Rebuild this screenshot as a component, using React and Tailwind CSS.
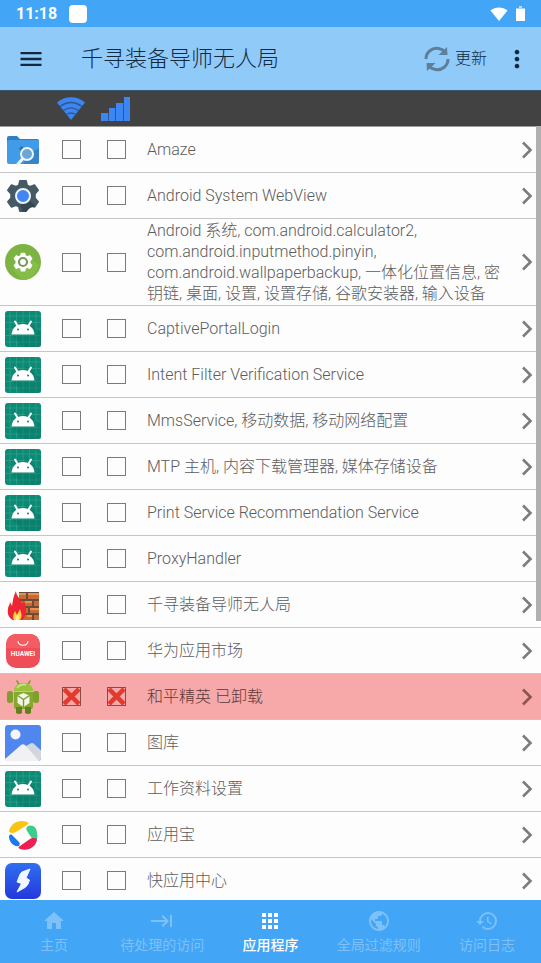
import { useState } from 'react';
import {
  MdApps,
  MdHistory,
  MdHome,
  MdKeyboardTab,
  MdMenu,
  MdMoreVert,
  MdPublic,
} from 'react-icons/md';

const APPS = [
  { id: 'amaze', name: 'Amaze', icon: 'amaze' },
  { id: 'webview', name: 'Android System WebView', icon: 'webview' },
  {
    id: 'system',
    name: 'Android 系统, com.android.calculator2, com.android.inputmethod.pinyin, com.android.wallpaperbackup, 一体化位置信息, 密钥链, 桌面, 设置, 设置存储, 谷歌安装器, 输入设备',
    icon: 'system',
  },
  { id: 'captive', name: 'CaptivePortalLogin', icon: 'android' },
  { id: 'intent', name: 'Intent Filter Verification Service', icon: 'android' },
  { id: 'mms', name: 'MmsService, 移动数据, 移动网络配置', icon: 'android' },
  { id: 'mtp', name: 'MTP 主机, 内容下载管理器, 媒体存储设备', icon: 'android' },
  { id: 'print', name: 'Print Service Recommendation Service', icon: 'android' },
  { id: 'proxy', name: 'ProxyHandler', icon: 'android' },
  { id: 'firewall', name: '千寻装备导师无人局', icon: 'firewall' },
  { id: 'huawei', name: '华为应用市场', icon: 'huawei' },
  { id: 'game', name: '和平精英 已卸载', icon: 'robot', blocked: true },
  { id: 'gallery', name: '图库', icon: 'gallery' },
  { id: 'work', name: '工作资料设置', icon: 'android' },
  { id: 'yyb', name: '应用宝', icon: 'pinwheel' },
  { id: 'quick', name: '快应用中心', icon: 'bolt' },
];

const TABS = [
  { label: '主页', Icon: MdHome },
  { label: '待处理的访问', Icon: MdKeyboardTab },
  { label: '应用程序', Icon: MdApps },
  { label: '全局过滤规则', Icon: MdPublic },
  { label: '访问日志', Icon: MdHistory },
];

const GEAR =
  'M15 3h6l1 4.5 3 1.5 4.5-1.8 3.5 5-3.2 3.6v4.4l3.2 3.6-3.5 5-4.5-1.8-3 1.5-1 4.5h-6l-1-4.5-3-1.5-4.5 1.8-3.5-5 3.2-3.6v-4.4L3 12.200l3.500-5L11 9l3-1.500z';

function AmazeIcon() {
  return (
    <>
      <path d="M2 6q0-2 2-2h8l3 3h17q2 0 2 2v3H2z" fill="#2f7fc4" />
      <path d="M2 10q0-2 2-2h28q2 0 2 2v20q0 2-2 2H4q-2 0-2-2z" fill="#429be6" />
      <path d="m24 22 10-6v14q0 2-2 2H18z" fill="#3685ca" />
      <path d="m14 16 3-2 2 3-3 3z" fill="#2b73b5" />
      <circle cx="22" cy="22" r="6" fill="#6ba6d6" stroke="#eef5fb" strokeWidth="2" />
      <path d="m17.500 27-5 5.500" stroke="#eef5fb" strokeWidth="3" strokeLinecap="round" />
    </>
  );
}

function WebViewIcon() {
  return (
    <>
      <path d={GEAR} fill="#455a64" stroke="#455a64" strokeWidth="2" strokeLinejoin="round" />
      <path d="m25 23 6 5-6 2-4 4h-3l-3-7z" fill="#344850" />
      <circle cx="18" cy="18" r="7" fill="#4285f4" stroke="#eef3fb" strokeWidth="2" />
    </>
  );
}

function SystemIcon() {
  return (
    <>
      <circle cx="18" cy="18" r="18" fill="#7cb342" />
      <path d="M8 26 18 8l16 13c-1 7-8 15-16 15z" fill="#85bd49" />
      <g transform="translate(7.500 7.500) scale(.585)">
        <path d={GEAR} fill="#fff" stroke="#fff" strokeWidth="2" strokeLinejoin="round" />
      </g>
      <circle cx="18" cy="18" r="4" fill="#fff" stroke="#7a9a5c" strokeWidth="2.200" />
    </>
  );
}

function AndroidIcon() {
  return (
    <>
      <rect width="36" height="36" rx="3" fill="#0b8a74" />
      <path
        d="M5 0v36M11.500 0v36M18 0v36M24.500 0v36M31 0v36M0 5h36M0 11.500h36M0 18h36M0 24.500h36M0 31h36"
        stroke="#3aa594"
        strokeWidth=".6"
      />
      <path d="m22 9 14 13v14H18L7 24z" fill="#05705f" opacity=".35" />
      <path d="m10 10.500 3 5M26 10.500l-3 5" stroke="#fff" strokeWidth="2" strokeLinecap="round" />
      <path d="M6.500 23.500c.6-6.500 5.300-10.500 11.500-10.500s10.900 4 11.500 10.500z" fill="#fff" />
      <circle cx="13" cy="18.500" r="1" fill="#2b7467" />
      <circle cx="23" cy="18.500" r="1" fill="#2b7467" />
    </>
  );
}

function FirewallIcon() {
  return (
    <>
      <rect x="14" y="5" width="20" height="28" fill="#6b4b3a" />
      <path
        d="M14 6h7v6h-7zM23 6h11v6H23zM14 14h13v5H14zM29 14h5v5h-5zM14 21h9v5h-9zM25 21h9v5h-9zM14 28h13v5H14zM29 28h5v5h-5z"
        fill="#c96a35"
      />
      <path d="M14 6h7v2h-7zM23 6h11v2H23zM20 14h7v2h-7zM25 21h9v2h-9zM22 28h5v2h-5z" fill="#e59355" />
      <path
        d="M11 4c0 5 5 8 6 13l2-3c2 5 3 10 1 15-1 3-3 4-5 4H8c-4-2-6-6-5-11 0-3 2-4 2-7l2 4c1-5 1-9 4-15z"
        fill="#ee2634"
      />
      <path d="M9 33c-2-4 0-6 1-9l2 4 3-6c1 4 3 7 0 11z" fill="#ffd23e" />
      <path d="M11 33c-1-3 1-4 2-6 1 2 1 4 0 6z" fill="#fff3a0" />
    </>
  );
}

function HuaweiIcon() {
  return (
    <>
      <rect x="1" y="1" width="34" height="34" rx="10" fill="#ef4d57" />
      <path d="M1 12Q2 1 12 1h12q10 0 11 11v3H1z" fill="#f25c62" />
      <path d="M13 8.500c1 5 9 5 10 0" fill="none" stroke="#fff" strokeWidth="1.200" strokeLinecap="round" />
      <text x="18" y="22.500" textAnchor="middle" fontSize="6.500" fontWeight="700" fill="#fff">
        HUAWEI
      </text>
    </>
  );
}

function RobotIcon() {
  return (
    <>
      <path d="m12 2 3 5M25 2l-3 5" stroke="#7d9a2a" strokeWidth="1.500" strokeLinecap="round" />
      <path d="M9 12c0-5 4-8 9.500-8S28 7 28 12z" fill="#9bc23c" />
      <path d="M12 9c2-3 6-4 9-3" stroke="#d0e58c" strokeWidth="1.500" fill="none" />
      <rect x="2" y="12" width="6" height="12" rx="2.500" fill="#7f9f2c" />
      <rect x="28" y="12" width="6" height="12" rx="2.500" fill="#7f9f2c" />
      <path d="M9 13h19v15q0 2-2 2H11q-2 0-2-2z" fill="#86a82f" />
      <path d="M11 28h6v6q-3 2-6 0zM20 28h6v6q-3 2-6 0z" fill="#65801f" />
      <path d="m18.500 14 6 2.500v7.500l-6 4-6-4v-7.500z" fill="#f2f6e6" />
      <path d="m12.500 16.500 6 4 6-4M18.500 20.500V28" fill="none" stroke="#7b9b2c" strokeWidth="1.400" />
    </>
  );
}

function GalleryIcon() {
  return (
    <>
      <rect width="36" height="36" rx="3" fill="#5087ee" />
      <path d="m21 21 4.500-2.500q1.500-1 3 0l7.500 7v7.500q0 3-3 3H20z" fill="#d3d6dc" />
      <path d="m0 34 16-14q2-1.500 4 0l14 16H3q-3 0-3-2z" fill="#f1f1f3" />
      <circle cx="10.500" cy="9.500" r="5" fill="#f4f6fb" />
    </>
  );
}

function PinwheelIcon() {
  return (
    <>
      <path d="M4 15C5 7 13 2 22 5c2 1 2 2 0 3L11 15q-3 2-7 0z" fill="#fbc312" />
      <path d="M23 9c5-2 9 2 9 7 1 4 0 6-1 8-1 1-2 1-3-1l-6-9c-1-2-1-4 1-5z" fill="#3dcc8b" />
      <path d="M32 22c0 7-9 13-17 10-2-1-2-2 0-3l10-7q3-2 7 0z" fill="#ee1f4e" />
      <path d="M14 29c-6 1-10-4-10-10 0-1 2-2 3-1l7 7c1 1 1 3 0 4z" fill="#1c78ef" />
    </>
  );
}

function BoltIcon() {
  return (
    <>
      <defs>
        <linearGradient id="boltFill" x1="0" y1="0" x2="0" y2="1">
          <stop offset="0" stopColor="#2f6ff0" />
          <stop offset="1" stopColor="#2338dc" />
        </linearGradient>
      </defs>
      <rect width="36" height="36" rx="7" fill="url(#boltFill)" />
      <path
        d="m25 6-8 3q-1.500 1-2 2.500L12 19l4.500 1.500L12 29l8-4.500q2-1.500 3-3.500l1.500-4-3.500-2z"
        fill="#f3f7ff"
        stroke="#f3f7ff"
        strokeLinejoin="round"
      />
    </>
  );
}

const ICONS = {
  amaze: AmazeIcon,
  webview: WebViewIcon,
  system: SystemIcon,
  android: AndroidIcon,
  firewall: FirewallIcon,
  huawei: HuaweiIcon,
  robot: RobotIcon,
  gallery: GalleryIcon,
  pinwheel: PinwheelIcon,
  bolt: BoltIcon,
};

function AppIcon({ type }) {
  const Shape = ICONS[type];
  return (
    <svg className="size-9" viewBox="0 0 36 36" aria-hidden="true">
      <Shape />
    </svg>
  );
}

function StatusBar() {
  return (
    <div className="flex h-[27px] shrink-0 items-center bg-[#42a5f5] px-4 text-white">
      <span className="text-base font-bold">11:18</span>
      <span className="ml-3 size-[18px] rounded bg-white" />
      <svg className="ml-auto h-[14px] w-[18px]" viewBox="0 0 18 14" aria-hidden="true">
        <path d="M9 14 .5 3.500C5 -.6 13-.6 17.500 3.500z" fill="currentColor" />
      </svg>
      <svg className="ml-2 h-[15px] w-[9px]" viewBox="0 0 9 15" aria-hidden="true">
        <path d="M3 0h3v2H3z" fill="currentColor" opacity=".6" />
        <path d="M0 2.500h9V15H0z" fill="currentColor" />
      </svg>
    </div>
  );
}

function Toolbar() {
  return (
    <header className="flex h-[63px] shrink-0 items-center bg-[#90caf9] pr-2.5 pl-[17px] text-[#10293f]">
      <button type="button" aria-label="菜单">
        <MdMenu className="size-7" />
      </button>
      <h1 className="ml-9 flex-1 text-[22px] font-light">千寻装备导师无人局</h1>
      <button type="button" className="flex items-center gap-1 text-base font-light">
        <svg className="size-7" viewBox="0 0 28 28" fill="none" aria-hidden="true">
          <g stroke="#5c7f9c" strokeWidth="3">
            <path d="M3 14C3 7 9 2.500 15.500 3.500c2 .3 4 1.200 5.500 2.500" />
            <path d="M25 14c0 7-6 11.500-12.500 10.500-2-.3-4-1.200-5.500-2.500" />
          </g>
          <path d="m24 2 .5 8h-9zM4 26l-.5-8h9z" fill="#5c7f9c" />
        </svg>
        更新
      </button>
      <button type="button" aria-label="更多选项" className="ml-4">
        <MdMoreVert className="size-7" />
      </button>
    </header>
  );
}

function ColumnHeader() {
  return (
    <div className="flex h-9 shrink-0 items-center border-t border-[#35566e] bg-[#424242] pl-12 text-[#3b86f2]">
      <div className="flex w-[45px] justify-center" title="Wi-Fi">
        <svg className="h-[23px] w-7" viewBox="0 0 28 23" aria-hidden="true">
          <path d="M14 23 0 5.500C8-1.500 20-1.500 28 5.500z" fill="currentColor" />
          <path
            d="M3 9.500c7-5 15-5 22 0M6.500 13.500c5-3.500 10-3.500 15 0M9.500 17.500c3-2 6-2 9 0"
            fill="none"
            stroke="#34558c"
            strokeWidth="1.400"
          />
        </svg>
      </div>
      <div className="flex w-[45px] justify-center" title="移动数据">
        <svg className="h-6 w-[29px]" viewBox="0 0 29 24" aria-hidden="true">
          <path d="M0 16h7v8H0zM8 11h6v13H8zM15 6h7v18h-7zM23 0h6v24h-6z" fill="currentColor" />
          <path d="M7.500 16v8M14.500 11v13M22.500 6v18" stroke="#34558c" />
        </svg>
      </div>
    </div>
  );
}

function BlockBox({ label, checked, onChange }) {
  return (
    <label className="grid w-[45px] shrink-0 place-items-center">
      <input
        type="checkbox"
        aria-label={label}
        checked={checked}
        onChange={onChange}
        className="peer col-start-1 row-start-1 size-[19px] appearance-none border border-[#7a7a7a] checked:border-[#8a4a46]"
      />
      <svg
        className="pointer-events-none invisible col-start-1 row-start-1 size-[17px] peer-checked:visible"
        viewBox="0 0 17 17"
        aria-hidden="true"
      >
        <path d="m1 1 15 15M16 1 1 16" stroke="#e23a2e" strokeWidth="4.500" />
      </svg>
    </label>
  );
}

function AppRow({ app, rule, onToggle }) {
  return (
    <li
      className={`flex min-h-[46px] items-center border-b border-[#c6c6c6] ${
        app.blocked ? 'bg-[#f7a9aa]' : 'bg-[#fdfdfd]'
      }`}
    >
      <div className="mr-1 flex w-[45px] shrink-0 justify-center">
        <AppIcon type={app.icon} />
      </div>
      <BlockBox label={`${app.name} Wi-Fi`} checked={rule.wifi} onChange={() => onToggle(app.id, 'wifi')} />
      <BlockBox label={`${app.name} 移动数据`} checked={rule.mobile} onChange={() => onToggle(app.id, 'mobile')} />
      <p
        className={`flex-1 py-px pr-3 pl-2 text-base leading-[21px] font-light ${
          app.blocked ? 'text-[#5c3a39]' : 'text-[#5c5c5c]'
        }`}
      >
        {app.name}
      </p>
      <button type="button" aria-label={`${app.name} 详情`} className="mr-2 shrink-0">
        <svg className="h-[18px] w-3" viewBox="0 0 12 18" fill="none" aria-hidden="true">
          <path d="m2 1.500 7.500 7.500L2 16.500" stroke={app.blocked ? '#8a5552' : '#7c7c7c'} strokeWidth="2.600" />
        </svg>
      </button>
    </li>
  );
}

export default function App() {
  const [activeTab, setActiveTab] = useState('应用程序');
  const [rules, setRules] = useState(() =>
    Object.fromEntries(APPS.map((app) => [app.id, { wifi: !!app.blocked, mobile: !!app.blocked }]))
  );

  const toggleRule = (id, network) => {
    setRules((prev) => ({ ...prev, [id]: { ...prev[id], [network]: !prev[id][network] } }));
  };

  return (
    <div className="flex h-screen flex-col overflow-hidden bg-[#fdfdfd] [font-family:Roboto,'Noto_Sans_CJK_SC',sans-serif]">
      <StatusBar />
      <Toolbar />
      <ColumnHeader />

      <main className="relative min-h-0 flex-1">
        <ul className="h-full overflow-y-auto border-t border-[#9a9a9a] [scrollbar-width:none]">
          {APPS.map((app) => (
            <AppRow key={app.id} app={app} rule={rules[app.id]} onToggle={toggleRule} />
          ))}
        </ul>
        {/* Scroll position indicator */}
        <div className="pointer-events-none absolute top-0 right-0 h-[64%] w-[5px] bg-[#b0b0b0]" />
      </main>

      <nav className="grid h-[63px] shrink-0 grid-cols-5 bg-[#42a5f5]">
        {TABS.map(({ label, Icon }) => (
          <button
            key={label}
            type="button"
            onClick={() => setActiveTab(label)}
            className={`flex flex-col items-center justify-center gap-0.5 text-sm whitespace-nowrap ${
              activeTab === label ? 'font-medium text-white' : 'text-[#7ec1f8]'
            }`}
          >
            <Icon className="size-6" />
            {label}
          </button>
        ))}
      </nav>
    </div>
  );
}
